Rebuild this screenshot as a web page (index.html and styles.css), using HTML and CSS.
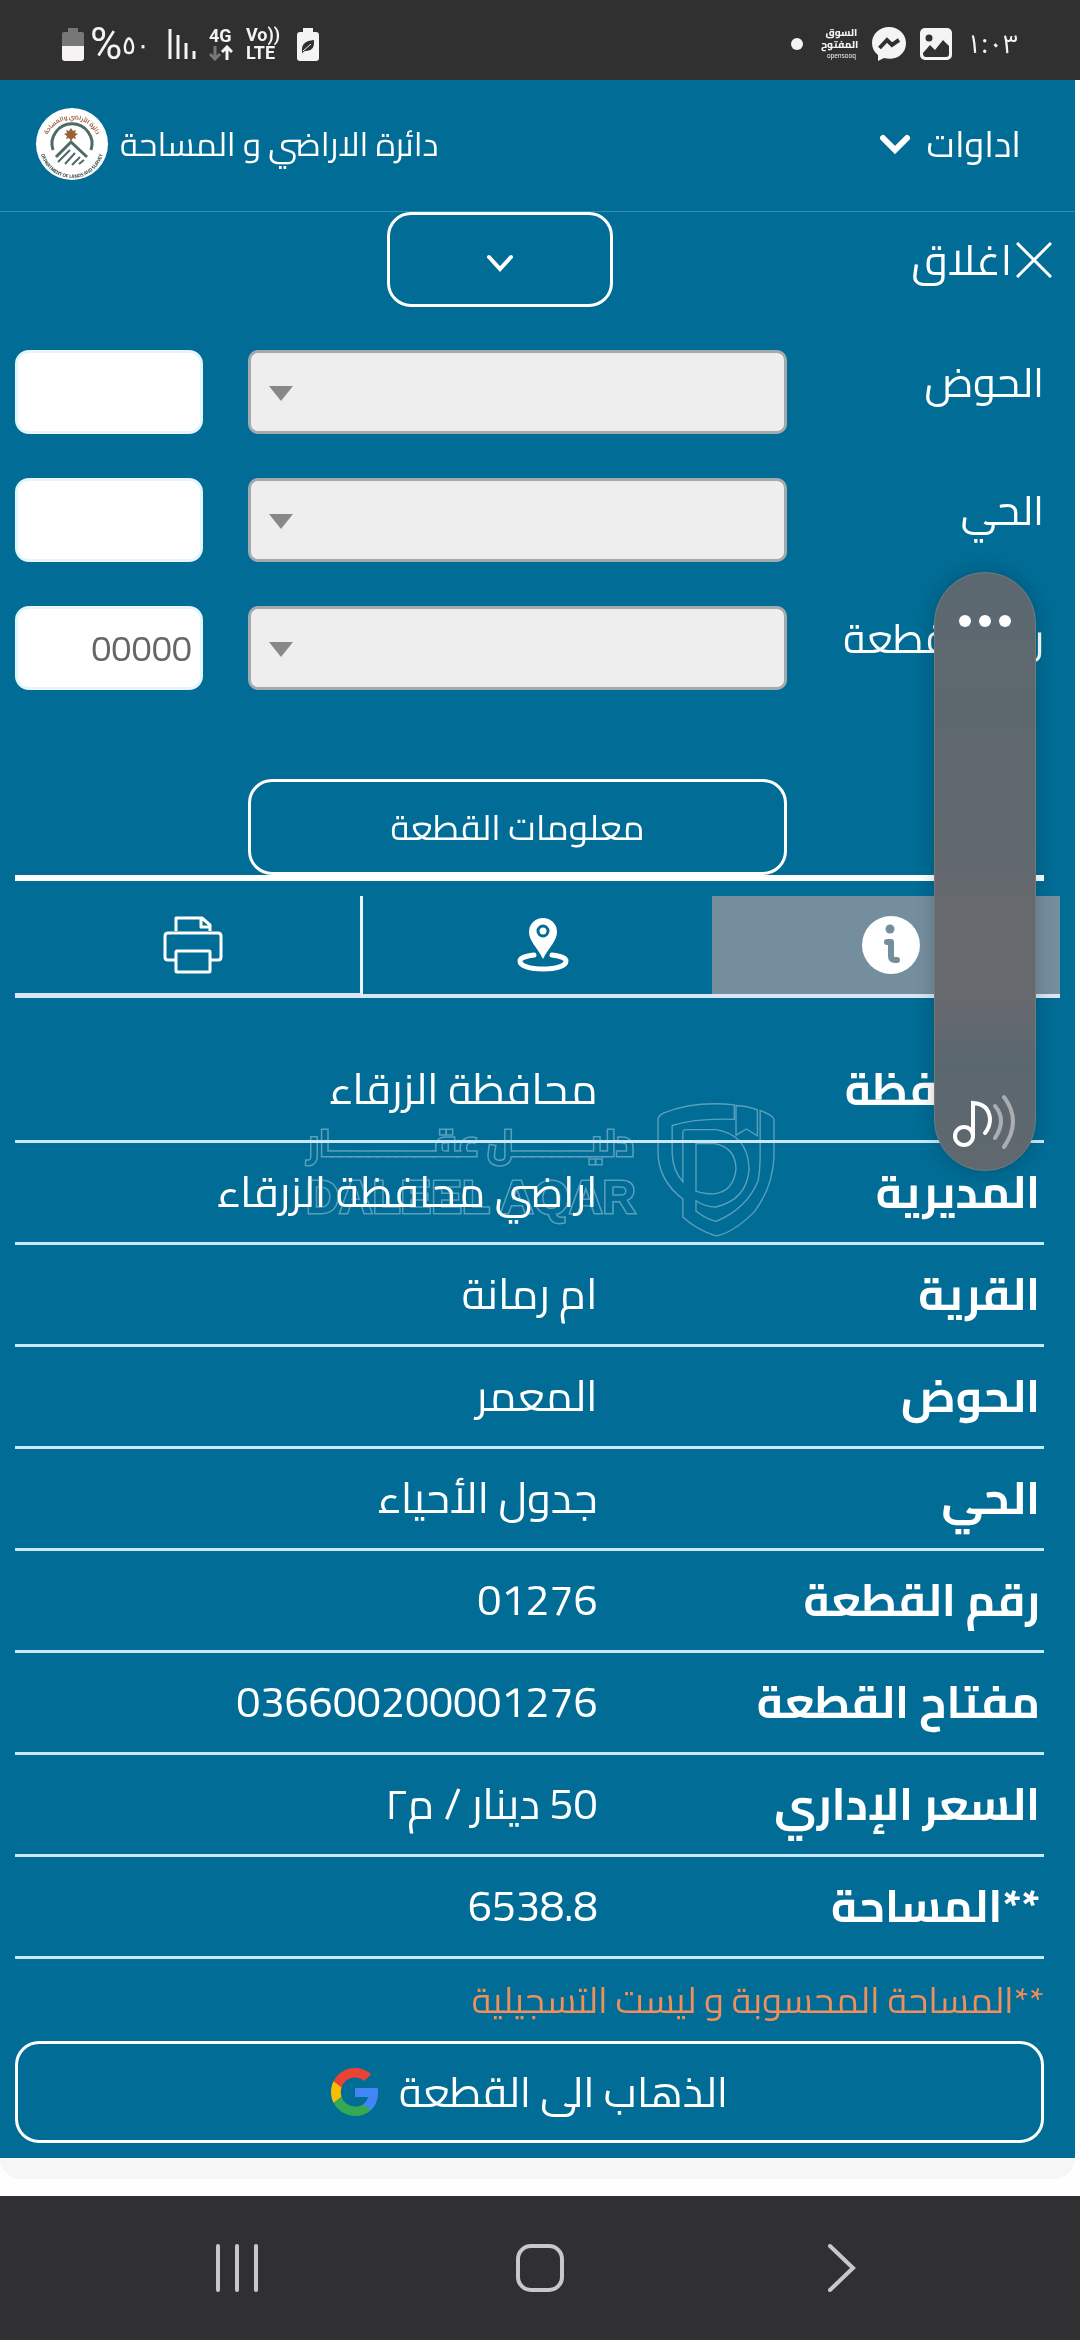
FILE: index.html
```
<!DOCTYPE html>
<html lang="ar" dir="rtl">
<head>
    <meta charset="UTF-8">
    <meta name="viewport" content="width=device-width, initial-scale=1.0">
    <title>دائرة الاراضي و المساحة</title>
    <link rel="stylesheet" href="styles.css">
</head>
<body>
    <div class="status-bar">
        <div class="status-group status-start">
            <span class="clock">١:٠٣</span>
            <svg width="32" height="32" viewBox="0 0 32 32">
                <rect width="32" height="32" rx="5" fill="#f5f3f4"/>
                <circle cx="9" cy="10" r="3.500" fill="#303030"/>
                <path d="M3 25l7-8 5 5 8-10 6 6v8q0 3-3 3H6q-3 0-3-4z" fill="#303030"/>
            </svg>
            <svg width="34" height="34" viewBox="0 0 34 34">
                <path d="M17 0C7.500 0 0 7 0 16c0 5 2 9 6 12v6l6-3c11 3 22-3 22-15C34 7 26.500 0 17 0z" fill="#f5f3f4"/>
                <path d="M7.500 21l7.500-8 5 5 7-5" fill="none" stroke="#303030" stroke-width="4"/>
            </svg>
            <span class="app-mark">السوق<br>المفتوح<small>opensooq</small></span>
            <span class="dot"></span>
        </div>
        <div class="status-group status-end">
            <svg width="22" height="33" viewBox="0 0 22 33">
                <path d="M6 0h10v4h4q2 0 2 2v13H0V6q0-2 2-2h4z" fill="#777"/>
                <path d="M0 18h22v12q0 3-3 3H3q-3 0-3-3z" fill="#f5f3f4"/>
            </svg>
            <span class="percent"><b>%</b>٥٠</span>
            <svg class="signal" width="28" height="32" viewBox="0 0 28 32" stroke="#f5f3f4" stroke-width="3">
                <path d="M2 1v30M10 7v24M18 15v16M26 23v8"/>
            </svg>
            <span class="net">4G<svg width="24" height="16" viewBox="0 0 24 16" fill="none" stroke-width="3">
                <path d="M6 1v13M1 9l5 5 5-5" stroke="#777"/>
                <path d="M18 15V2M13 7l5-5 5 5" stroke="#f5f3f4"/>
            </svg></span>
            <span class="net">Vo))<br>LTE</span>
            <svg class="saver" width="22" height="33" viewBox="0 0 22 33">
                <path d="M6 0h10v4h3q3 0 3 3v23q0 3-3 3H3q-3 0-3-3V7q0-3 3-3h3z" fill="#f5f3f4"/>
                <path d="M5 23q-1-10 12-11 1 12-9 11l-3 2zM7 21l6-5" fill="#303030"/>
                <path d="M6 23l8-7" stroke="#f5f3f4" fill="none"/>
            </svg>
        </div>
    </div>

    <main class="app">
        <header class="top-bar">
            <button class="tools" type="button">اداوات
                <svg width="30" height="20" viewBox="0 0 30 20"><path d="M3 4l12 12L27 4" fill="none" stroke="#fff" stroke-width="6" stroke-linecap="round"/></svg>
            </button>
            <div class="brand">
                <span>دائرة الاراضي و المساحة</span>
                <svg width="72" height="72" viewBox="0 0 72 72">
                    <defs>
                        <path id="ring-top" d="M9 38a27 27 0 0 1 54 0"/>
                        <path id="ring-bottom" d="M4 38a32 32 0 0 0 64 0"/>
                    </defs>
                    <circle cx="36" cy="36" r="36" fill="#fff"/>
                    <g fill="none" stroke="#4e6b66">
                        <path d="M17 42a20 20 0 1 1 38 0" stroke-width="3"/>
                        <path d="M20 49l15-15 16 15" stroke-width="3"/>
                        <path d="M22 54l12-12M29 56l10-11M36 57l8-8M43 56l5-4" stroke-width="2"/>
                    </g>
                    <path d="M35 20l2 3 3-1-1 3 3 1-3 2 1 3-3-1-2 3-2-3-3 1 1-3-3-2 3-1-1-3 3 1z" fill="#9a6238"/>
                    <text class="ring-text ring-brown" text-anchor="middle"><textPath href="#ring-top" startOffset="50%">دائرة الأراضي والمساحة</textPath></text>
                    <text class="ring-text" direction="ltr" text-anchor="middle"><textPath href="#ring-bottom" startOffset="50%">DEPARTMENT OF LANDS AND SURVEY</textPath></text>
                </svg>
            </div>
        </header>

        <div class="panel-bar">
            <button class="close" type="button">
                <svg width="36" height="36" viewBox="0 0 36 36"><path d="M1 1l34 34M35 1L1 35" stroke="#fff" stroke-width="3"/></svg>
                اغلاق
            </button>
            <button class="outline collapse" type="button" aria-label="طي">
                <svg width="28" height="19" viewBox="0 0 28 19"><path d="M3 3l11 12L25 3" fill="none" stroke="#fff" stroke-width="4" stroke-linecap="round"/></svg>
            </button>
        </div>

        <section class="content">
            <form class="search">
                <label for="basin">الحوض</label>
                <span class="select-box"><select id="basin"><option></option></select></span>
                <input type="text" aria-label="رقم الحوض">

                <label for="quarter">الحي</label>
                <span class="select-box"><select id="quarter"><option></option></select></span>
                <input type="text" aria-label="رقم الحي">

                <label for="parcel">رقم القطعة</label>
                <span class="select-box"><select id="parcel"><option></option></select></span>
                <input type="text" placeholder="00000" aria-label="رقم القطعة">

                <button class="outline submit" type="button">معلومات القطعة</button>
            </form>

            <div class="tabs">
                <button class="tab active" type="button" aria-label="معلومات">
                    <svg width="58" height="58" viewBox="0 0 58 58">
                        <circle cx="29" cy="29" r="29" fill="#fff"/>
                        <circle cx="28" cy="13" r="4.500" fill="#758e9e"/>
                        <path d="M25 26h4v14q0 4 4 4h2" fill="none" stroke="#758e9e" stroke-width="6" stroke-linecap="round" stroke-linejoin="round"/>
                    </svg>
                </button>
                <button class="tab" type="button" aria-label="الموقع">
                    <svg width="52" height="54" viewBox="0 0 52 54">
                        <path d="M26 0a14 14 0 0 0-14 14c0 9 8 15 14 27 6-12 14-18 14-27A14 14 0 0 0 26 0z" fill="#fff"/>
                        <circle cx="26" cy="13" r="5" fill="none" stroke="#016c95" stroke-width="3"/>
                        <path d="M17 37C7 38 3 41 3 43c0 5 10 8 23 8s23-3 23-8c0-2-4-5-14-6" fill="none" stroke="#fff" stroke-width="5" stroke-linecap="round"/>
                    </svg>
                </button>
                <button class="tab" type="button" aria-label="طباعة">
                    <svg width="60" height="58" viewBox="0 0 60 58" fill="none" stroke="#fff" stroke-width="3" stroke-linejoin="round">
                        <path d="M13 15V2h26l8 7v6M38 2v9h9"/>
                        <path d="M13 44H5q-3 0-3-3V20q0-3 3-3h50q3 0 3 3v21q0 3-3 3h-8"/>
                        <rect x="13" y="35" width="34" height="21" rx="1"/>
                    </svg>
                </button>
            </div>

            <table class="details">
                <tr><th>المحافظة</th><td>محافظة الزرقاء</td></tr>
                <tr><th>المديرية</th><td>اراضي محافظة الزرقاء</td></tr>
                <tr><th>القرية</th><td>ام رمانة</td></tr>
                <tr><th>الحوض</th><td>المعمر</td></tr>
                <tr><th>الحي</th><td>جدول الأحياء</td></tr>
                <tr><th>رقم القطعة</th><td>01276</td></tr>
                <tr><th>مفتاح القطعة</th><td>036600200001276</td></tr>
                <tr><th>السعر الإداري</th><td>50 دينار / م٢</td></tr>
                <tr><th>**المساحة</th><td>6538.8</td></tr>
            </table>

            <p class="note">**المساحة المحسوبة و ليست التسجيلية</p>

            <button class="outline goto" type="button">
                الذهاب الى القطعة
                <svg width="48" height="48" viewBox="0 0 48 48">
                    <path fill="#4285f4" d="M47 24.500c0-1.600-.1-3.200-.4-4.500H24v9h13c-.6 3-2.300 5.500-4.800 7.200v6h7.700C44.400 38 47 31.800 47 24.500z"/>
                    <path fill="#34a853" d="M24 48c6.500 0 11.900-2.100 15.900-5.800l-7.700-6c-2.200 1.400-4.900 2.300-8.200 2.300-6.300 0-11.600-4.200-13.500-9.900h-8v6.200C6.500 42.600 14.600 48 24 48z"/>
                    <path fill="#fbbc05" d="M10.500 28.600c-1-3-1-6.200 0-9.200v-6.200h-8c-3.300 6.800-3.300 14.800 0 21.600z"/>
                    <path fill="#ea4335" d="M24 9.500c3.500 0 6.700 1.200 9.200 3.600l6.900-6.900C35.900 2.400 30.500 0 24 0 14.600 0 6.500 5.400 2.500 13.200l8 6.200C12.400 13.700 17.700 9.500 24 9.500z"/>
                </svg>
            </button>
        </section>

        <div class="watermark">
            <div class="watermark-text">
                <span class="wm-ar">دليــــــــل عقـــــــــــار</span>
                <span class="wm-en">DALEEL AQAR</span>
            </div>
            <svg width="118" height="136" viewBox="339 1049 342 394" fill="none" stroke="#5aa0bc" stroke-width="4">
                <path d="M342 1100q3-10 15-16 90-36 206-24v42q-110-4-180 18v80q2 52 31 83v-141q0-10 10-10h86q92 14 96 113-6 90-96 111-32 0-58-18v30q26 22 58 30 90-38 122-118 6-30 6-80v-123q32 10 40 24v110q-4 90-58 160-60 60-110 69-60-20-96-55v-52q-70-53-72-133z"/>
                <path d="M452 1310v-138h52q62 10 64 73-6 66-64 73-30 0-52-8zM568 1062v86l30-18 32 20v-75q-30-12-62-13z"/>
            </svg>
        </div>
    </main>
    <div class="page-end"></div>

    <aside class="volume">
        <button class="more" type="button" aria-label="المزيد"><i></i><i></i><i></i></button>
        <svg width="64" height="56" viewBox="0 0 64 56" fill="none" stroke="#fff" stroke-width="4" stroke-linecap="round">
            <circle cx="11" cy="42" r="9"/>
            <path d="M20 42V9q16 1 17 16 0 8-5 14"/>
            <path d="M42 12q12 14 0 32" stroke="#a9aeb1"/>
            <path d="M51 3q18 24 0 50" stroke="#a9aeb1"/>
        </svg>
    </aside>

    <nav class="nav-bar">
        <button type="button" aria-label="رجوع"><svg width="28" height="48" viewBox="0 0 28 48"><path d="M2 2l23 22L2 46"/></svg></button>
        <button type="button" aria-label="الرئيسية"><svg width="48" height="48" viewBox="0 0 48 48"><rect x="2" y="2" width="44" height="44" rx="13"/></svg></button>
        <button type="button" aria-label="التطبيقات"><svg width="46" height="48" viewBox="0 0 46 48"><path d="M3 2v44M22 2v44M41 2v44"/></svg></button>
    </nav>
</body>
</html>
```
FILE: styles.css
```
* {
    box-sizing: border-box;
}
body {
    margin: 0;
    position: relative;
    background: #fefefe;
    color: #fff;
    font-family: "Cairo", "Noto Sans", sans-serif;
}
button {
    margin: 0;
    padding: 0;
    border: none;
    background: none;
    color: inherit;
    font-family: inherit;
}
svg {
    display: block;
    flex-shrink: 0;
}

/* status bar */
.status-bar {
    display: flex;
    justify-content: space-between;
    height: 80px;
    padding: 8px 62px 0;
    background: #303030;
    color: #f5f3f4;
}
.status-group {
    display: flex;
    align-items: center;
}
.status-start {
    gap: 14px;
}
.status-end {
    direction: ltr;
}
.clock {
    direction: ltr;
    font: 26px "Noto Sans", "Noto Sans Arabic", sans-serif;
}
.app-mark {
    width: 34px;
    font-size: 10px;
    line-height: 12px;
    font-weight: 800;
    text-align: center;
}
.app-mark small {
    display: block;
    direction: ltr;
    font-size: 7px;
    line-height: 10px;
    font-weight: 400;
}
.dot {
    width: 12px;
    height: 12px;
    margin-right: 7px;
    border-radius: 50%;
    background: #f5f3f4;
}
.percent {
    display: flex;
    align-items: center;
    width: 72px;
    margin-left: 6px;
    font: 26px/36px "Noto Sans", sans-serif;
}
.percent b {
    font: 44px/36px Roboto, sans-serif;
}
.signal {
    margin-left: 6px;
}
.net {
    margin-left: 13px;
    font: bold 18px/18px Roboto, sans-serif;
}
.saver {
    margin-left: 17px;
}

/* application */
.app {
    margin-right: 5px;
    background: #016c95;
}
.top-bar {
    display: flex;
    justify-content: space-between;
    padding: 28px 54px 31px 36px;
    border-bottom: 1px solid #2f8fb3;
}
.tools,
.brand {
    display: flex;
    align-items: center;
    line-height: 72px;
}
.tools {
    gap: 16px;
    font-size: 36px;
}
.brand {
    gap: 12px;
    font-size: 33px;
}
.ring-text {
    font-size: 5px;
    font-weight: 700;
    fill: #3f4f4c;
}
.ring-brown {
    font-size: 6px;
    fill: #9a5b38;
}
.outline {
    display: flex;
    align-items: center;
    justify-content: center;
    border: 3px solid #fff;
    border-radius: 24px;
}
.panel-bar {
    display: grid;
    grid-template-columns: 43% 21% 36%;
    height: 95px;
}
.close {
    display: flex;
    align-items: center;
    gap: 4px;
    padding-right: 23px;
    font-size: 42px;
}
.collapse {
    padding-top: 8px;
}
.content {
    padding: 43px 31px 15px 15px;
}
.search {
    display: grid;
    grid-template-columns: 212fr 539fr 188fr;
    gap: 44px 45px;
    border-bottom: 6px solid #fff;
}
.search label {
    font-size: 41px;
    line-height: 64px;
    white-space: nowrap;
}
.select-box {
    position: relative;
}
.select-box::after {
    content: "";
    position: absolute;
    left: 21px;
    top: 36px;
    border: 12px solid transparent;
    border-top: 15px solid #888;
    border-bottom: none;
}
.search select {
    appearance: none;
    display: block;
    width: 100%;
    height: 84px;
    border: 3px solid #a3aaae;
    border-radius: 10px;
    background: #eee;
    font: inherit;
}
.search input {
    width: 100%;
    min-width: 0;
    height: 84px;
    padding: 0 8px;
    border: 3px solid #e4f5fb;
    border-radius: 14px;
    background: #fff;
    color: #666;
    font: 36px "Cairo", sans-serif;
}
.search input::placeholder {
    color: #666;
}
.submit {
    grid-column: 2;
    height: 96px;
    margin-top: 45px;
    font-size: 35px;
}

/* tabs */
.tabs {
    display: grid;
    grid-template-columns: repeat(3, 1fr);
    margin: 15px -16px 0 0;
}
.tab {
    display: flex;
    align-items: center;
    justify-content: center;
    height: 102px;
    padding-left: 10px;
    border-bottom: 4px solid #dbe6f5;
}
.tab:last-child {
    border-right: 3px solid #e6f5fc;
    border-bottom-width: 5px;
}
.tab.active {
    background: #758e9e;
}

/* parcel details */
.details {
    width: 100%;
    margin-top: 41px;
    border-collapse: collapse;
    text-align: right;
    line-height: 60px;
}
.details tr {
    height: 102px;
    border-bottom: 3px solid #c9e9f9;
}
.details th {
    width: 43%;
    padding: 0 4px;
    font-size: 45px;
    font-weight: 700;
}
.details td {
    padding: 0 4px;
    font-size: 43px;
}
.note {
    margin: 0;
    color: #ef8f5c;
    font-size: 36px;
    line-height: 82px;
}
.goto {
    width: 100%;
    height: 102px;
    gap: 20px;
    font-size: 42px;
}

/* watermark over the table */
.watermark {
    position: absolute;
    left: 306px;
    top: 1101px;
    display: flex;
    direction: ltr;
    gap: 23px;
    mix-blend-mode: lighten;
    pointer-events: none;
}
.watermark-text {
    width: 328px;
    padding-top: 14px;
    color: #016c95;
    -webkit-text-stroke: 3px #5aa0bc;
    paint-order: stroke fill;
    white-space: nowrap;
}
.watermark-text span {
    display: block;
}
.wm-ar {
    direction: rtl;
    font-size: 37px;
    font-weight: 700;
    line-height: 56px;
}
.wm-en {
    font: bold 46px/52px "Liberation Sans", sans-serif;
}

.page-end {
    height: 21px;
    margin: 0 5px 17px 0;
    border-radius: 0 0 40px 40px;
    background: #f6f6f6;
}

/* volume slider floating over the page */
.volume {
    position: absolute;
    top: 572px;
    right: 44px;
    display: flex;
    flex-direction: column;
    align-items: center;
    justify-content: space-between;
    width: 102px;
    height: 599px;
    padding: 36px 0 20px;
    border: 1px solid #75797a;
    border-radius: 51px;
    background: linear-gradient(#5c6870, #5f686d 45%, #66696e 55%, #66696e 72%, #5b6770 82%, #5f686e);
    box-shadow: 0 0 20px rgba(0, 0, 0, 0.2);
}
.more {
    display: flex;
    gap: 8px;
    padding-top: 6px;
}
.more i {
    width: 12px;
    height: 12px;
    border-radius: 50%;
    background: #fff;
}

.nav-bar {
    display: grid;
    grid-template-columns: repeat(3, 1fr);
    height: 144px;
    padding: 0 87px;
    background: #303032;
}
.nav-bar button {
    display: flex;
    align-items: center;
    justify-content: center;
}
.nav-bar svg {
    fill: none;
    stroke: #cac7cc;
    stroke-width: 4px;
    stroke-linecap: round;
}
```
